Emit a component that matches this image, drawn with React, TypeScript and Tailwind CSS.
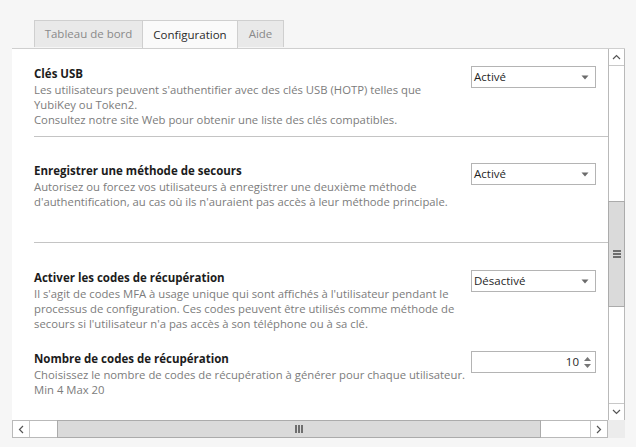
import React from 'react';

const Caret: React.FC = () => (
  <svg width="8" height="5" viewBox="0 0 8 5" className="shrink-0">
    <path d="M0.5 0.5 H7.5 L4 4.5 Z" fill="#6b6b6b" />
  </svg>
);

const Select: React.FC<{ value: string }> = ({ value }) => (
  <div className="mt-[1px] flex h-[22px] w-[125px] shrink-0 items-center justify-between border border-[#b4b4b4] bg-white pl-[2px] pr-[6px] text-[11.5px] text-[#1f1f1f]">
    <span>{value}</span>
    <Caret />
  </div>
);

const NumberBox: React.FC<{ value: number }> = ({ value }) => (
  <div className="mt-[1px] flex h-[22px] w-[125px] shrink-0 items-center justify-end border border-[#b4b4b4] bg-white pr-[4px] text-[11.5px] text-[#1f1f1f]">
    <span className="mr-[5px]">{value}</span>
    <div className="flex flex-col gap-[3px]">
      <svg width="7" height="4" viewBox="0 0 7 4"><path d="M0 4 L3.5 0 L7 4 Z" fill="#777" /></svg>
      <svg width="7" height="4" viewBox="0 0 7 4"><path d="M0 0 L3.5 4 L7 0 Z" fill="#777" /></svg>
    </div>
  </div>
);

const Setting: React.FC<{ title: string; lines: string[]; control: React.ReactNode; className?: string }> = ({ title, lines, control, className }) => (
  <div className={'flex items-start pr-[12px] ' + (className || '')}>
    <div className="w-[437px] shrink-0">
      <div className="text-[11.5px] font-bold leading-[17px] text-[#1c1c1c] whitespace-nowrap">{title}</div>
      {lines.map((l, i) => (
        <div key={i} className="text-[11.3px] leading-[15px] text-[#7c7c7c] whitespace-nowrap">{l}</div>
      ))}
    </div>
    {control}
  </div>
);

const App: React.FC = () => {
  return (
    <div className="w-[636px] h-[447px] overflow-hidden bg-[#f6f6f6] pt-[20px] pl-[12px] font-['Open_Sans',sans-serif]">
      {/* onglets */}
      <div className="flex pl-[22px] text-[11.5px] leading-none">
        <div className="flex h-[27px] w-[109px] items-center justify-center border border-b-0 border-[#cfcfcf] bg-[#e9e9e9] text-[#8a8a8a]">Tableau de bord</div>
        <div className="-ml-px flex h-[28px] w-[96px] items-center justify-center border border-b-0 border-[#cfcfcf] bg-[#fafafa] text-[#2a2a2a] relative z-10">Configuration</div>
        <div className="-ml-px flex h-[27px] w-[47px] items-center justify-center border border-b-0 border-[#cfcfcf] bg-[#e9e9e9] text-[#8a8a8a]">Aide</div>
      </div>

      {/* panneau */}
      <div className="w-[613px] h-[390px] border-t border-[#cfcfcf] bg-white flex flex-col">
        <div className="flex h-[372px]">
          <div className="w-[596px] overflow-hidden pl-[22px]">
            <Setting
              className="pt-[16px]"
              title="Clés USB"
              lines={[
                "Les utilisateurs peuvent s'authentifier avec des clés USB (HOTP) telles que",
                'YubiKey ou Token2.',
                'Consultez notre site Web pour obtenir une liste des clés compatibles.',
              ]}
              control={<Select value="Activé" />}
            />
            <div className="mt-[9px] h-px bg-[#c4c4c4]" />
            <Setting
              className="pt-[25px]"
              title="Enregistrer une méthode de secours"
              lines={[
                'Autorisez ou forcez vos utilisateurs à enregistrer une deuxième méthode',
                "d'authentification, au cas où ils n'auraient pas accès à leur méthode principale.",
              ]}
              control={<Select value="Activé" />}
            />
            <div className="mt-[33px] h-px bg-[#c4c4c4]" />
            <Setting
              className="pt-[26px]"
              title="Activer les codes de récupération"
              lines={[
                "Il s'agit de codes MFA à usage unique qui sont affichés à l'utilisateur pendant le",
                'processus de configuration. Ces codes peuvent être utilisés comme méthode de',
                "secours si l'utilisateur n'a pas accès à son téléphone ou à sa clé.",
              ]}
              control={<Select value="Désactivé" />}
            />
            <Setting
              className="pt-[19px]"
              title="Nombre de codes de récupération"
              lines={[
                'Choisissez le nombre de codes de récupération à générer pour chaque utilisateur.',
                'Min 4 Max 20',
              ]}
              control={<NumberBox value={10} />}
            />
          </div>
          {/* barre verticale */}
          <div className="w-[17px] flex flex-col border-x border-[#b9b9b9] bg-white">
            <div className="h-[17px] flex items-center justify-center border-b border-[#c8c8c8]">
              <svg width="9" height="6" viewBox="0 0 9 6"><path d="M1 5 L4.5 1.5 L8 5" stroke="#555" strokeWidth="1.2" fill="none" /></svg>
            </div>
            <div className="h-[135px]" />
            <div className="h-[106px] -mx-px border border-[#ababab] bg-[#dadada] flex items-center justify-center">
              <div className="flex flex-col gap-[1px]">
                <div className="h-[2px] w-[8px] bg-[#6e6e6e]" />
                <div className="h-[2px] w-[8px] bg-[#6e6e6e]" />
                <div className="h-[2px] w-[8px] bg-[#6e6e6e]" />
              </div>
            </div>
            <div className="flex-1" />
            <div className="h-[17px] flex items-center justify-center border-t border-[#c8c8c8]">
              <svg width="9" height="6" viewBox="0 0 9 6"><path d="M1 1 L4.5 4.5 L8 1" stroke="#555" strokeWidth="1.2" fill="none" /></svg>
            </div>
          </div>
        </div>
        {/* barre horizontale */}
        <div className="flex h-[18px]">
          <div className="w-[596px] flex border border-[#b9b9b9] bg-white">
            <div className="w-[17px] flex items-center justify-center border-r border-[#c8c8c8]">
              <svg width="6" height="9" viewBox="0 0 6 9"><path d="M5 1 L1.5 4.5 L5 8" stroke="#555" strokeWidth="1.2" fill="none" /></svg>
            </div>
            <div className="w-[27px]" />
            <div className="w-[484px] -my-px border border-[#ababab] bg-[#dadada] flex items-center justify-center">
              <div className="flex gap-[1px]">
                <div className="w-[2px] h-[8px] bg-[#6e6e6e]" />
                <div className="w-[2px] h-[8px] bg-[#6e6e6e]" />
                <div className="w-[2px] h-[8px] bg-[#6e6e6e]" />
              </div>
            </div>
            <div className="flex-1" />
            <div className="w-[17px] flex items-center justify-center border-l border-[#c8c8c8]">
              <svg width="6" height="9" viewBox="0 0 6 9"><path d="M1 1 L4.5 4.5 L1 8" stroke="#555" strokeWidth="1.2" fill="none" /></svg>
            </div>
          </div>
          <div className="w-[17px] bg-[#ececec]" />
        </div>
      </div>
    </div>
  );
};

export default App;
